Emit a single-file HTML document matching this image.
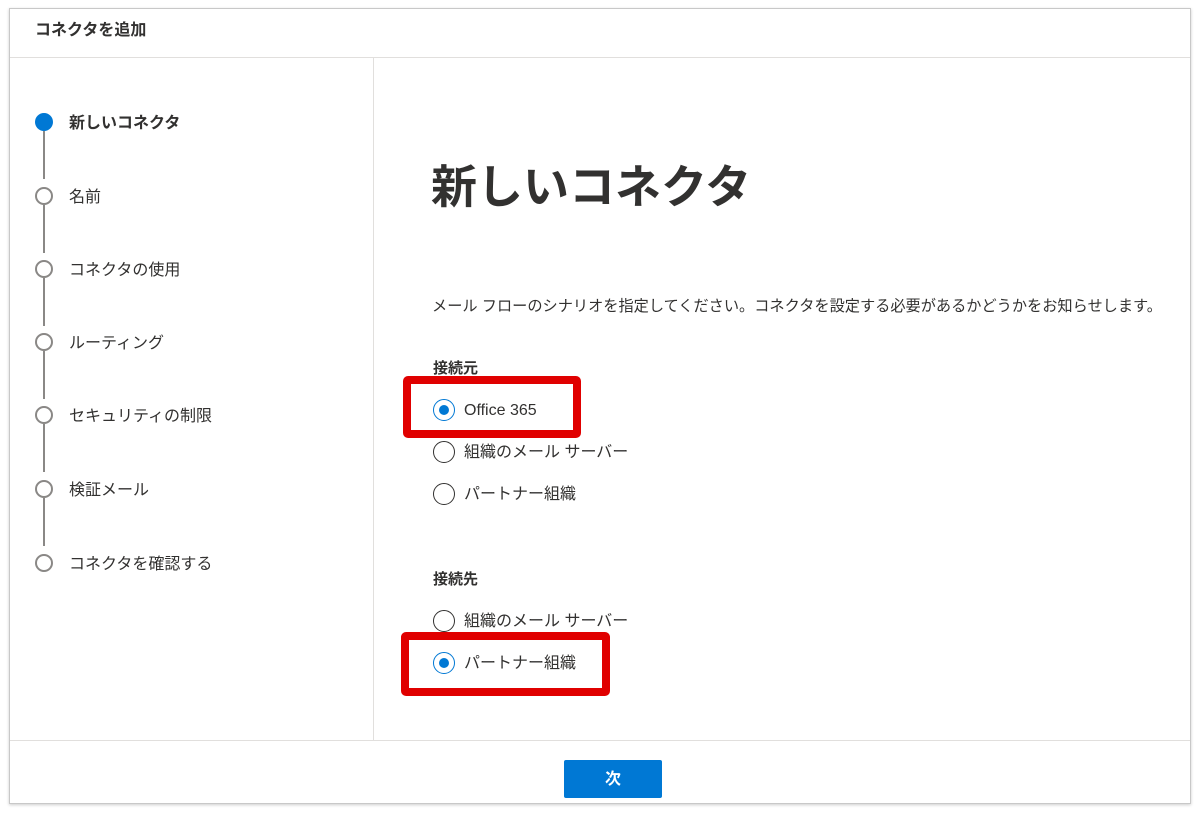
<!DOCTYPE html>
<html><head><meta charset="utf-8"><style>
*{box-sizing:border-box;margin:0;padding:0}
body{width:1200px;height:813px;background:#fff;position:relative;font-family:"Liberation Sans","Noto Sans CJK JP",sans-serif;color:#323130;overflow:hidden}
.frame{position:absolute;left:9px;top:8px;width:1182px;height:796px;border:1px solid #c8c8c8;box-shadow:0 1px 3px rgba(0,0,0,.2)}
.abs{position:absolute}
.step{position:absolute;left:69px;font-size:16px;line-height:20px}
.dot{position:absolute;left:35px;width:18px;height:18px;border-radius:50%;border:2px solid #8a8886;background:#fff}
.line{position:absolute;left:43px;width:2px;background:#8a8886}
.radio{position:absolute;left:433px;width:22px;height:22px;border-radius:50%;border:1.5px solid #323130;background:#fff}
.radio.on{border-color:#0078d4}
.radio.on::after{content:"";position:absolute;left:4.5px;top:4.5px;width:10px;height:10px;border-radius:50%;background:#0078d4}
.rl{position:absolute;left:464px;font-size:16px;line-height:20px}
.red{position:absolute;border:8px solid #e00000;border-radius:5px}
</style></head><body>
<div class="frame"></div>
<div class="abs" style="left:35px;top:21px;font-size:16px;font-weight:bold;line-height:20px">コネクタを追加</div>
<div class="abs" style="left:10px;top:57px;width:1180px;height:1px;background:#e1dfdd"></div>
<div class="abs" style="left:373px;top:58px;width:1px;height:682px;background:#e1dfdd"></div>
<div class="abs" style="left:10px;top:740px;width:1180px;height:1px;background:#e1dfdd"></div>

<div class="line" style="top:131px;height:48px"></div>
<div class="line" style="top:205px;height:48px"></div>
<div class="line" style="top:278px;height:48px"></div>
<div class="line" style="top:351px;height:48px"></div>
<div class="line" style="top:424px;height:48px"></div>
<div class="line" style="top:498px;height:48px"></div>
<div class="dot" style="top:113px;border-color:#0078d4;background:#0078d4"></div>
<div class="dot" style="top:187px"></div>
<div class="dot" style="top:260px"></div>
<div class="dot" style="top:333px"></div>
<div class="dot" style="top:406px"></div>
<div class="dot" style="top:480px"></div>
<div class="dot" style="top:554px"></div>
<div class="step" style="top:114px;font-weight:bold">新しいコネクタ</div>
<div class="step" style="top:188px">名前</div>
<div class="step" style="top:261px">コネクタの使用</div>
<div class="step" style="top:334px">ルーティング</div>
<div class="step" style="top:407px">セキュリティの制限</div>
<div class="step" style="top:481px">検証メール</div>
<div class="step" style="top:555px">コネクタを確認する</div>

<div class="abs" style="left:431px;top:158px;font-size:46px;font-weight:bold;line-height:58px;color:#323130">新しいコネクタ</div>
<div class="abs" style="left:432px;top:297px;font-size:15.2px;line-height:20px;white-space:nowrap">メール フローのシナリオを指定してください。コネクタを設定する必要があるかどうかをお知らせします。</div>
<div class="abs" style="left:433px;top:359px;font-size:15px;font-weight:bold;line-height:20px">接続元</div>
<div class="radio on" style="top:399px"></div><div class="rl" style="top:401px">Office 365</div>
<div class="radio" style="top:441px"></div><div class="rl" style="top:443px">組織のメール サーバー</div>
<div class="radio" style="top:483px"></div><div class="rl" style="top:485px">パートナー組織</div>
<div class="abs" style="left:433px;top:570px;font-size:15px;font-weight:bold;line-height:20px">接続先</div>
<div class="radio" style="top:610px"></div><div class="rl" style="top:612px">組織のメール サーバー</div>
<div class="radio on" style="top:652px"></div><div class="rl" style="top:654px">パートナー組織</div>
<div class="red" style="left:403px;top:376px;width:178px;height:62px"></div>
<div class="red" style="left:401px;top:632px;width:209px;height:64px"></div>

<div class="abs" style="left:564px;top:760px;width:98px;height:38px;background:#0078d4;border-radius:2px;color:#fff;font-weight:bold;font-size:16px;line-height:40px;text-align:center">次</div>
</body></html>
